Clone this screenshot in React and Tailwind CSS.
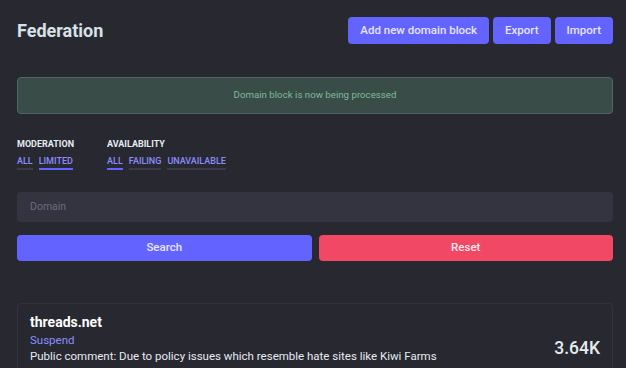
export default function App() {
  const font = { fontFamily: "Roboto, 'Liberation Sans', sans-serif" };

  return (
    <div
      className="min-h-screen w-full bg-[#282830] text-[#d9e1e8] pl-[17px] pr-[13px] pt-[17px] overflow-hidden"
      style={font}
    >
      {/* header */}
      <div className="flex items-center justify-between h-[27px]">
        <h1 className="text-[18px] font-bold text-[#d9e1e8] leading-none">Federation</h1>
        <div className="flex gap-[4px]">
          <button className="h-[27px] px-[12px] rounded-[4px] bg-[#6364ff] text-[11.5px] font-medium text-[#e6e6ff]">
            Add new domain block
          </button>
          <button className="h-[27px] px-[12px] rounded-[4px] bg-[#6364ff] text-[11.5px] font-medium text-[#e6e6ff]">
            Export
          </button>
          <button className="h-[27px] px-[12px] rounded-[4px] bg-[#6364ff] text-[11.5px] font-medium text-[#e6e6ff]">
            Import
          </button>
        </div>
      </div>

      {/* flash */}
      <div className="mt-[33px] h-[37px] rounded-[4px] border border-[#4a6a5f] bg-[#394c47] flex items-center justify-center text-[9.7px] text-[#79bd9a]">
        Domain block is now being processed
      </div>

      {/* filters */}
      <div className="mt-[24px] flex gap-[33px]">
        <div>
          <div className="text-[9px] font-bold leading-[12px] text-[#e6ebf0]">MODERATION</div>
          <div className="mt-[5px] flex gap-[6px] text-[9px] font-medium leading-[12px]">
            <span className="pb-[1px] border-b-2 border-[#393a48] text-[#8c8dff]">ALL</span>
            <span className="pb-[1px] border-b-2 border-[#6364ff] text-[#8c8dff]">LIMITED</span>
          </div>
        </div>
        <div>
          <div className="text-[9px] font-bold leading-[12px] text-[#e6ebf0]">AVAILABILITY</div>
          <div className="mt-[5px] flex gap-[6px] text-[9px] font-medium leading-[12px]">
            <span className="pb-[1px] border-b-2 border-[#6364ff] text-[#8c8dff]">ALL</span>
            <span className="pb-[1px] border-b-2 border-[#393a48] text-[#8c8dff]">FAILING</span>
            <span className="pb-[1px] border-b-2 border-[#393a48] text-[#8c8dff]">UNAVAILABLE</span>
          </div>
        </div>
      </div>

      {/* search form */}
      <div className="mt-[22px] h-[30px] rounded-[4px] bg-[#33343f] flex items-center px-[13px] text-[10.5px] text-[#6b6c80]">
        Domain
      </div>
      <div className="mt-[13px] flex gap-[7px]">
        <button className="flex-1 h-[26px] rounded-[4px] bg-[#6364ff] text-[11.5px] font-medium text-[#e6e6ff]">
          Search
        </button>
        <button className="flex-1 h-[26px] rounded-[4px] bg-[#f04865] text-[11.5px] font-medium text-[#ffe6ea]">
          Reset
        </button>
      </div>

      {/* result card */}
      <div className="mt-[42px] rounded-[4px] border border-[#32333e] px-[12px] pt-[8px] pb-[12px] flex items-end justify-between">
        <div>
          <div className="text-[14px] font-bold text-white leading-[20px]">threads.net</div>
          <div className="text-[11.5px] text-[#8c8dff] leading-[16px]">Suspend</div>
          <div className="text-[11.5px] text-[#e6ebf0] leading-[16px]">
            Public comment: Due to policy issues which resemble hate sites like Kiwi Farms
          </div>
        </div>
        <div className="text-[17.5px] font-medium text-[#e6ebf0] leading-none mb-[7px]">3.64K</div>
      </div>
    </div>
  );
}
